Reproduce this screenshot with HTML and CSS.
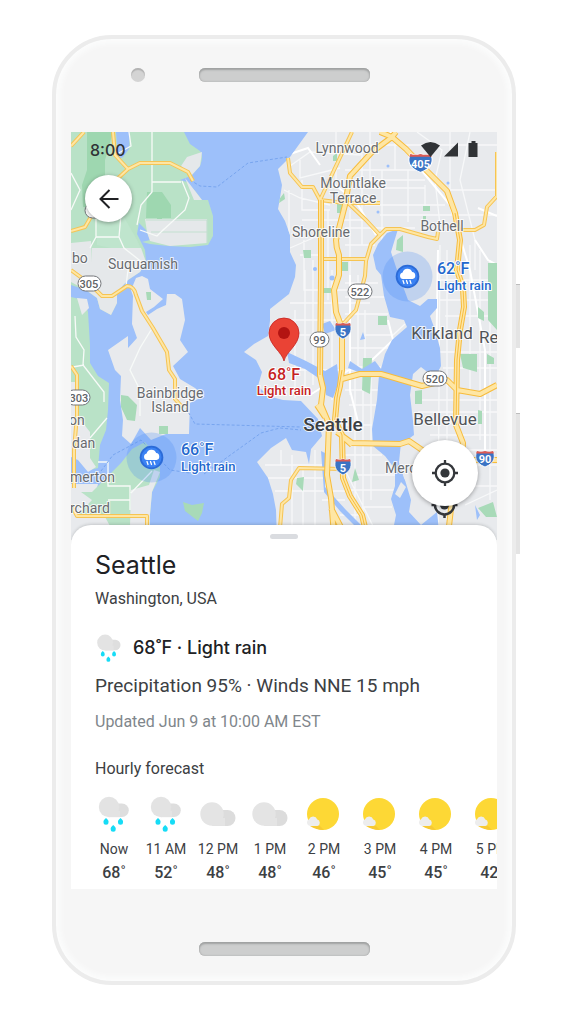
FILE: index.html
```html
<!DOCTYPE html>
<html lang="en">
<head>
<meta charset="utf-8">
<meta name="viewport" content="width=device-width, initial-scale=1">
<title>Seattle weather</title>
<link rel="stylesheet" href="styles.css">
</head>
<body>
<main class="phone">
  <span class="side-key power"></span>
  <span class="side-key volume"></span>
  <div class="bezel top-bezel"><span class="camera"></span><span class="speaker"></span></div>

  <div class="screen">
    <section class="map" aria-label="Map">
      <svg class="map-art" viewBox="71 132 426 408" preserveAspectRatio="xMidYMid slice">
        <defs>
          <clipPath id="land-clip"><use href="#east"/></clipPath>
          <g id="pin-rain">
            <circle r="25" fill="#4285f4" opacity=".24"/>
            <circle r="11.8" fill="#2b6bd8"/><circle r="10" fill="#3b82f3"/>
            <path d="M-4.500 2.500a3.300 3.300 0 0 1-.4-6.500a5 5 0 0 1 9.600-.4a3.500 3.500 0 0 1 .3 6.900z" fill="#fff"/>
            <path d="M-4.500 4l1 3M-1 4l1 3M2.500 4l1 3" stroke="#fff" stroke-width="1.300" stroke-linecap="round"/>
          </g>
          <g id="interstate">
            <path d="M-7-7Q-3.500-5.500 0-7Q3.500-5.500 7-7C9-2 9 5 0 9C-9 5-9-2-7-7z" fill="#3a73c4" stroke="#fff" stroke-width=".8"/>
            <path d="M-7-7Q-3.500-5.500 0-7Q3.500-5.500 7-7L7.800-4.500H-7.800z" fill="#dd5b53"/>
          </g>
        </defs>
        <rect x="71" y="132" width="426" height="408" fill="#9dc0fa"/>

        <!-- western shore -->
        <path fill="#b9e2c7" d="M71 132H116L117 145L116 154Q119 160 123 157L129 149L130 132H184L190 144L200 151Q204 156 200 166L191 176L180 180L187 182L196 192L202 200L208 200L213 216V236L208 245L190 247L168 246L150 244L142 242L150 240L146 230L139 223L137 234L145 250L146 262L140 272L128 280L117 292V303L111 315L100 309L97 298L86 290L71 285z"/>
        <path fill="#9ed7b0" d="M87 132H113L105 160V207H83L82 185L87 170zM147 192H162L171 205V218H162V231H157V218H146z"/>
        <path fill="#bfe5cd" d="M97 245V215L120 210L137 240L144 255z"/>
        <path fill="#e5e8ea" d="M71 243L91 241L92 262V248H141L146 262L140 272L128 280L117 292V303L111 315L100 309L97 298L86 290L71 282zM187 157L202 152L200 166L191 176L181 166zM185 178L202 200H194zM145 219H207V243L170 246L150 241L147 232z"/>
        <path fill="none" stroke="#c3dfd0" stroke-width="1.200" d="M146 220H207V243M151 232H207"/>
        <path fill="#b9e2c7" d="M71 297L84 300L88 312L90 345V363L98 376L109 383L108 410L106 430L100 445L98 468L90 470L80 450L71 445z"/>
        <path fill="#e8eaed" d="M77 298L87 299L89 308L82 315zM71 382L79 382V418L90 432V458L96 467L88 472L78 460L71 457zM71 484H98L94 500L78 515H150V540H71z"/>
        <path fill="#b9e2c7" d="M81 492H92L108 476L121 463L132 449L145 442L160 460V477L152 492L149 526H110L104 515H78L92 500z"/>
        <path fill="#e8eaed" d="M131 490L149 485L154 470L160 472L152 492L149 526H130z"/>
        <path fill="#e8eaed" d="M136 278L142 276L148 279L150 289L163 299L154 307L146 312L148 315L157 309L166 305L167 294L175 294L182 299L185 320L180 340L188 352L173 366L180 379L195 388L204 396L190 403L189 434H166L151 440L140 428L131 444L122 436L123 420L120 400L121 376L115 370L108 350L128 336V348L137 338L132 324L133 296L131 290z"/>
        <path fill="#a8dab8" d="M146 292H151V300H147zM121 395L128 396L137 405L135 421L127 420L121 407zM159 426H168V434H159zM183 502L192 505L204 503L202 513L198 521L185 511z"/>
        <path fill="none" stroke="#f7faf8" stroke-width="1.300" d="M129 132L131 146L117 154M71 173L80 190L71 210M152 132V182H181M152 182V192L141 205L137 225M96 210V237M96 237L90 248M96 237H119L121 214M119 237L124 248L143 263M182 181L189 198L185 210L161 232M140 230L157 236L164 229M128 270L126 286M75 316L76 337L84 350L83 365L104 392V402M84 365L73 367M151 330L140 348L130 370L140 390V416M90 438L107 418M98 462H108V486H130V510M108 500H130M152 471L131 493"/>

        <!-- eastern shore -->
        <path id="east" fill="#e8eaed" d="M308 132L290 157L278 169L282 185L280 198L278 209L285 221L290 235V252L296 265L295 277L289 294L270 309V321L268 336L254 344L244 352L256 360L262 372L258 386L268 396L283 400L301 401L318 419L322 436L311 449L309 464L306 452L292 450L286 438L271 448L257 462L268 478L273 494L276 510L277 540H497V132z"/>
        <g clip-path="url(#land-clip)">
          <path fill="none" stroke="#f7f8f9" stroke-width="1.300" d="M290 166L310 152L360 155L370 145H497M284 190L300 198L330 205M289 190V240M302 180V210H330M302 220H365M290 248L320 235M300 160V178L340 168M336 132V180M362 150V245M370 132V180H425M345 170H430M382 170V250M395 132V170M408 170V222M425 185V210M360 188H425M365 205H445M380 215H497M417 132L442 150L435 180L440 225M450 132V190H497M470 132L460 180L475 240V270M345 228H415M345 245H375M300 255H320M304 240V290H370M290 303H370M275 320H345M270 335H320M285 370H355M295 310V398M305 270V390M313 260V385M328 210V300M332 270V400M350 210V395M358 275V375M345 283H378M345 297H385M345 314H388M365 335H393L405 324M350 348H388M355 367H381M365 310V365M345 390H380M349 405H378M355 375V525M363 378V520M371 378V500M345 425H372M345 455H382M355 475H395M345 490H395M362 507H392M322 500H345M340 515H360M265 465H325M268 478H325M275 491H350M281 450V465M292 455V530M303 470V535M315 450V535M345 470L380 540M440 245L438 535M447 250V520M470 245V390M480 250V440M490 260V500M438 280H497M440 300H497M445 316H497M440 352H497M443 368H497M415 400H497M418 412H497M430 435H497M430 450H497M465 465H497M468 486H497M465 505L497 490"/>
          <path fill="none" stroke="#fff" stroke-width="2" d="M328 180L355 200L376 235M290 154L308 148L320 165M390 132L450 205L470 270L485 350V450M350 275L350 390L360 430M388 320L393 340L372 360M438 250L436 370M310 395L349 370M478 208L497 216M475 240L488 260L497 265"/>
          <path fill="#a8dab8" d="M277 202L284 193L285 199L279 203zM333 156L337 153L337 161H333zM303 250H311V258H304zM337 204H346V213H337zM342 262H348V271H342zM323 288H331V293H323zM423 206H430V211H423zM423 216H426V220H423zM397 240L403 235V252L396 250zM378 316H387V325H378zM478 307L484 312V321L478 318zM488 263H497V330L488 320zM460 354H477V372L463 368zM487 354L494 358V364H487zM363 358L372 358L370 394L362 390zM415 391L422 390V404H415zM478 410L482 411V424H478zM297 478L304 477L303 491L296 484zM355 468L359 480L352 482zM478 508L493 502L497 517H486z"/>
          <g fill="#9dc0fa">
            <path d="M398 229L387 233L378 244L373 255L376 269L381 275L384 296L390 317L404 320L407 327L392 340L385 354L381 369L375 361L362 369L350 361L348 368L366 375H379L377 400L372 429L373 446L385 456L395 469V486L391 499L396 515L391 540H440L437 512L421 525L409 512L411 500L405 480L399 462L406 455L403 443L414 435L413 421L410 395L413 374L421 367L435 378L441 366L440 348L435 330L430 316L437 308L437 299L428 299L420 306L408 300L397 270L391 252z"/>
            <path d="M287 352L306 361L325 371L337 364L339 382L333 398L326 395L323 381L305 369L289 363zM322 324L330 321L336 330L325 334zM321 451L325 453V487L346 510L366 530L360 531L340 511L324 492zM360 340L365 339L363 332zM460 310L462 320L463 314zM475 505L480 515L477 520z"/>
            <circle cx="315" cy="269" r="2"/><circle cx="332" cy="278" r="2.500"/><circle cx="388" cy="166" r="1.500"/><circle cx="448" cy="183" r="1.500"/><circle cx="378" cy="212" r="1.500"/>
          </g>
          <path fill="#e8eaed" d="M401 443L409 439L424 451L430 478L425 490L411 490L404 478L399 462zM401 482L406 487L400 498L395 494z"/>
        </g>

        <g fill="none" stroke="#78a5ef" stroke-width="1" stroke-dasharray="3 2">
          <path d="M190 180L200 186L217 187L248 163L287 157M186 408L195 424L301 427M204 474L261 433L280 428L301 430M98 475L113 455L141 440L170 470L190 473"/>
        </g>

        <g class="road-edge">
          <path id="roads-thin" d="M71 146L84 132M113 132L115 155L128 169L140 163H170L188 172L193 181M128 169L115 181L101 199L92 215L85 227L71 231M71 270L90 284L102 296H112L127 286Q134 286 136 295L142 311L153 328L167 352L169 370L175 379V399L183 408M71 366L77 375V415L74 450V488M71 505L77 516H147V530M288 158L290 173L302 187H313L320 200L345 203H380M345 200L366 220L380 235M438 232L437 239L428 237L400 229L386 229L371 244L366 261L365 276L356 310L342 325M457 230H475L484 225L487 207L497 196V152M321 259H366M352 132L320 200M279 540L282 504L289 498L291 480L299 468L342 469"/>
        </g>
        <use href="#roads-thin" class="road-fill"/>
        <g class="road-edge wide">
          <path id="roads-wide" d="M321 200V278L320 375L323 388L321 405L329 424L327 475L331 498L334 535M331 508L345 535M380 132L392 137L372 152L350 176L345 205L336 240Q336 248 339 255V275L334 290L336 312L342 328V370L340 386L337 398L335 420L342 435L343 478L350 496L362 515L368 540M392 137L406 149L424 168L447 191L455 213L460 240L457 270L463 288L464 307L460 330L457 360L456 425L463 443L461 480L452 500L448 535M392 137L396 132M342 379L360 374H381L422 386L447 380L457 390L480 394L497 385M337 432L352 443L400 444L409 441L425 452L450 460H497M317 405L325 417M342 436L352 445"/>
        </g>
        <use href="#roads-wide" class="road-fill wide"/>
        <path fill="none" stroke="#f7bc3c" stroke-width="1" d="M321 200V278L320 375M342 370L337 398L335 420L342 435L343 478L350 496L362 515L368 540M455 213L460 240L457 270L463 288L464 307L460 330L457 360L456 425"/>

        <g class="shield">
          <rect x="78" y="276" width="23" height="15" rx="7.500"/><text x="89" y="287.500">305</text>
          <rect x="66" y="390" width="24" height="15" rx="7.500"/><text x="79" y="402">303</text>
          <rect x="348" y="284" width="24" height="15" rx="7.500"/><text x="360" y="296">522</text>
          <rect x="310" y="332" width="19" height="15" rx="7.500"/><text x="319.500" y="344">99</text>
          <rect x="423" y="371" width="24" height="15" rx="7.500"/><text x="435" y="383">520</text>
          <rect x="85" y="203" width="20" height="15" rx="7.500"/>
        </g>
        <g class="interstates">
          <use href="#interstate" transform="translate(420.500 162) scale(1.450 1.150)"/><text x="420.500" y="167.500">405</text>
          <use href="#interstate" x="343" y="330"/><text x="343" y="336">5</text>
          <use href="#interstate" x="343" y="466"/><text x="343" y="472">5</text>
          <use href="#interstate" transform="translate(485 458) scale(1.150 1)"/><text x="485" y="463">90</text>
        </g>

        <g class="places">
          <text x="347" y="153">Lynnwood</text>
          <text x="353" y="188">Mountlake</text><text x="353" y="203">Terrace</text>
          <text x="321" y="237">Shoreline</text>
          <text x="442" y="231">Bothell</text>
          <text x="143" y="269">Suquamish</text>
          <text x="170" y="398">Bainbridge</text><text x="170" y="412">Island</text>
          <g class="from-left">
            <text x="72" y="263">bo</text><text x="69" y="425">on</text><text x="72" y="448">dan</text>
            <text x="70" y="482">merton</text><text x="70" y="513">rchard</text><text x="385" y="473">Mercer</text>
          </g>
          <text class="town" x="442" y="339">Kirkland</text>
          <text class="town from-left" x="479" y="343">Redmond</text>
          <text class="town" x="445" y="425">Bellevue</text>
          <text class="city" x="333" y="431">Seattle</text>
        </g>

        <use href="#pin-rain" x="407.500" y="276.500"/>
        <use href="#pin-rain" x="151.500" y="457.500"/>
        <g class="reading">
          <text class="degrees" x="437" y="274">62˚F</text><text x="437" y="290">Light rain</text>
          <text class="degrees" x="181" y="455">66˚F</text><text x="181" y="471">Light rain</text>
        </g>
        <path d="M284 361C282 352 269 345 269 333A15 15 0 0 1 299 333C299 345 286 352 284 361z" fill="#ea4335" stroke="#c5221f" stroke-width=".8"/>
        <circle cx="284" cy="333" r="6" fill="#b31412"/>
        <g class="reading here">
          <text class="degrees" x="284" y="380">68˚F</text><text x="284" y="395">Light rain</text>
        </g>
        <g fill="none" stroke="#34373b" stroke-width="2.500">
          <circle cx="444.500" cy="505" r="9.500"/><path d="M444.500 492v4M444.500 514v4M431.500 505h4M453.500 505h4"/>
          <circle cx="444.500" cy="505" r="4.500" fill="#34373b" stroke="none"/>
        </g>
      </svg>

      <div class="map-overlay">
        <div class="status">
          <span class="clock">8:00</span>
          <svg class="status-icons" viewBox="0 0 58 18" fill="#303336">
            <path d="M0 4.500Q9.500-2.500 19 4.500L9.500 16z"/><path d="M37 1.500V15.500H23z"/><path d="M50.500 0h4v2h2v14h-9V2h3z"/>
          </svg>
        </div>
        <button class="round back" aria-label="Back">
          <svg viewBox="0 0 24 24" fill="none" stroke="#202124" stroke-width="2"><path d="M21.500 12H4M12.500 3L3.500 12L12.500 21"/></svg>
        </button>
        <button class="round locate" aria-label="My location">
          <svg viewBox="0 0 26 26" fill="none" stroke="#34373b" stroke-width="2.300"><circle cx="13" cy="13" r="9.300"/><path d="M13 0v4M13 22v4M0 13h4M22 13h4"/><circle cx="13" cy="13" r="4.600" fill="#34373b" stroke="none"/></svg>
        </button>
      </div>
    </section>

    <section class="sheet">
      <span class="handle"></span>
      <h1>Seattle</h1>
      <p class="region">Washington, USA</p>
      <p class="now">
        <svg class="now-icon" viewBox="0 0 36 36"><use href="#i-rain"/></svg>
        <span>68˚F · Light rain</span>
      </p>
      <p class="details">Precipitation 95% · Winds NNE 15 mph</p>
      <p class="updated">Updated Jun 9 at 10:00 AM EST</p>
      <h2>Hourly forecast</h2>
      <svg class="symbols" aria-hidden="true">
        <symbol id="i-rain" viewBox="0 0 36 36">
          <path d="M13 21H26A6.800 6.800 0 0 0 26 7.400H20z" fill="#dedede"/><circle cx="13" cy="11" r="10.200" fill="#e3e3e3"/><path d="M13 21.200V15H24V21.200z" fill="#e3e3e3"/>
          <g fill="#16dcf6"><path id="drop" d="M10 22Q13 24.500 12.500 26.300A2.500 2.500 0 0 1 7.500 26.300Q7 24.500 10 22z"/><use href="#drop" x="14.500"/><use href="#drop" x="7.200" y="7"/></g>
        </symbol>
        <symbol id="i-cloud" viewBox="0 0 36 36">
          <path d="M12 30H27.500A8 8 0 0 0 27.500 14H20z" fill="#dcdcdc"/><circle cx="12" cy="18" r="11.700" fill="#e4e4e4"/><path d="M12 29.900V22H25V29.900z" fill="#e4e4e4"/>
        </symbol>
        <symbol id="i-sun" viewBox="0 0 36 36">
          <circle cx="17" cy="18" r="16" fill="#fdd835"/><path d="M4 30H14L18 34Q10 34 4 30z" fill="#f7c933"/>
          <path d="M4 30A3.600 3.600 0 0 1 3 23.200A4.500 4.500 0 0 1 11.300 23.500A3.400 3.400 0 0 1 11.500 30z" fill="#ededed"/>
        </symbol>
      </svg>
      <ul class="hours">
        <li><svg><use href="#i-rain"/></svg><span>Now</span><strong>68˚</strong></li>
        <li><svg><use href="#i-rain"/></svg><span>11 AM</span><strong>52˚</strong></li>
        <li><svg><use href="#i-cloud"/></svg><span>12 PM</span><strong>48˚</strong></li>
        <li><svg><use href="#i-cloud"/></svg><span>1 PM</span><strong>48˚</strong></li>
        <li class="sunny"><svg><use href="#i-sun"/></svg><span>2 PM</span><strong>46˚</strong></li>
        <li class="sunny"><svg><use href="#i-sun"/></svg><span>3 PM</span><strong>45˚</strong></li>
        <li class="sunny"><svg><use href="#i-sun"/></svg><span>4 PM</span><strong>45˚</strong></li>
        <li class="sunny"><svg><use href="#i-sun"/></svg><span>5 PM</span><strong>42˚</strong></li>
      </ul>
    </section>
  </div>

  <div class="bezel bottom-bezel"><span class="speaker"></span></div>
</main>
</body>
</html>
```
FILE: styles.css
```css
* { box-sizing: border-box; }

body {
  margin: 0;
  padding: 35px 60px 38px 52px;
  background: #fff;
  color: #3c4043;
  font-family: Roboto, "Liberation Sans", sans-serif;
}

h1, h2, p, ul { margin: 0; padding: 0; font-weight: 400; }

.phone {
  position: relative;
  padding: 0 15px;
  border: 4px solid #ececec;
  border-radius: 60px;
  background: #f6f6f6;
  box-shadow: inset 0 0 7px 3px #fdfefe;
}

.side-key {
  position: absolute;
  left: calc(100% + 4px);
  width: 4px;
  background: #e4e4e4;
  border-top: 1px solid #bdbdbd;
}
.power { top: 245px; height: 64px; }
.volume { top: 374px; height: 141px; }

.bezel {
  display: grid;
  grid-template-columns: 1fr 171px 1fr;
}
.top-bezel { height: 93px; padding-top: 29px; }
.bottom-bezel { height: 92px; padding-top: 53px; }

.speaker {
  grid-column: 2;
  height: 14px;
  border-radius: 6px;
  background: #cdcece;
  box-shadow: inset 0 2px 2px #a0a2a2, inset 0 0 2px #a0a2a2;
}
.camera {
  width: 14px;
  height: 14px;
  margin-left: 60px;
  border-radius: 50%;
  background: #d4d4d4;
  box-shadow: inset 0 2px 1px #b2b2b2;
}

.screen { overflow: hidden; background: #fff; }

.map { display: grid; height: 408px; }
.map-art, .map-overlay { grid-area: 1 / 1; width: 100%; height: 408px; }
.map-overlay {
  position: relative;
  display: flex;
  flex-direction: column;
  padding: 9px 19px;
}

.road-edge, .road-fill { fill: none; stroke-linejoin: round; }
.road-edge { stroke: #f6c453; stroke-width: 4; }
.road-fill { stroke: #fee6a4; stroke-width: 2; }
.road-edge.wide { stroke: #f7bc3c; stroke-width: 6; }
.road-fill.wide { stroke: #fee6a4; stroke-width: 4; }

.shield rect { fill: #fff; stroke: #74777b; stroke-width: 1; }
.shield text { fill: #5f6368; font-size: 11px; font-weight: 500; text-anchor: middle; }
.interstates text { fill: #fff; font-size: 11px; font-weight: 700; text-anchor: middle; }

.places text {
  fill: #686b6f;
  font-size: 14px;
  text-anchor: middle;
  stroke: #fff;
  stroke-width: 2px;
  stroke-opacity: .8;
  paint-order: stroke;
}
.places .from-left text, .places text.from-left { text-anchor: start; }
.places text.town { fill: #505357; font-size: 17px; }
.places text.city { fill: #3c4043; font-size: 19px; font-weight: 500; }

.reading {
  fill: #2368ce;
  stroke: #fff;
  stroke-width: 2px;
  paint-order: stroke;
  font-size: 13px;
  font-weight: 500;
}
.reading .degrees { font-size: 16px; }
.reading.here { fill: #c5221f; text-anchor: middle; }

.status { display: flex; justify-content: space-between; height: 20px; }
.clock { color: #303336; font: 500 16px/18px Inter, sans-serif; }
.status-icons { width: 58px; height: 18px; margin-right: -1px; }

.round {
  display: grid;
  place-items: center;
  padding: 0;
  border: 0;
  border-radius: 50%;
  background: #fff;
  box-shadow: 0 1px 4px rgb(0 0 0 / 35%);
}
.back { width: 47px; height: 47px; margin: 14px 0 0 -5px; }
.back svg { width: 24px; height: 24px; }
.locate { width: 66px; height: 66px; margin: auto 0 25px auto; }
.locate svg { width: 26px; height: 26px; }

.sheet {
  position: relative;
  margin-top: -15px;
  padding: 9px 24px 6px;
  border-radius: 20px 20px 0 0;
  background: #fff;
  box-shadow: 0 -1px 3px rgb(60 64 67 / 20%);
}
.handle {
  display: block;
  width: 28px;
  height: 5px;
  margin: 0 auto 10px;
  border-radius: 3px;
  background: #dadce0;
}
h1 { color: #202124; font: 400 25px/32px Inter, sans-serif; }
.region { margin-top: 8px; font-size: 16px; line-height: 20px; }
.now {
  display: flex;
  align-items: center;
  gap: 10px;
  margin-top: 24px;
  color: #202124;
  font: 500 18px/30px Inter, sans-serif;
}
.now-icon { width: 28px; height: 28px; }
.details { margin-top: 11px; font-size: 19px; line-height: 24px; }
.updated { margin-top: 14px; color: #80868b; font-size: 16px; line-height: 20px; }
h2 { margin-top: 27px; font-size: 16px; line-height: 20px; }
.symbols { display: block; width: 0; height: 0; }

.hours {
  display: flex;
  margin: 17px -24px 0 -7px;
  overflow: hidden;
  list-style: none;
}
.hours li {
  display: flex;
  flex: 0 0 52px;
  flex-direction: column;
  align-items: center;
  white-space: nowrap;
}
.hours li.sunny { flex-basis: 56px; }
.hours svg { width: 36px; height: 36px; }
.hours span { margin-top: 8px; font-size: 14px; line-height: 18px; }
.hours strong { margin-top: 5px; font-size: 16px; font-weight: 500; line-height: 20px; }
```
